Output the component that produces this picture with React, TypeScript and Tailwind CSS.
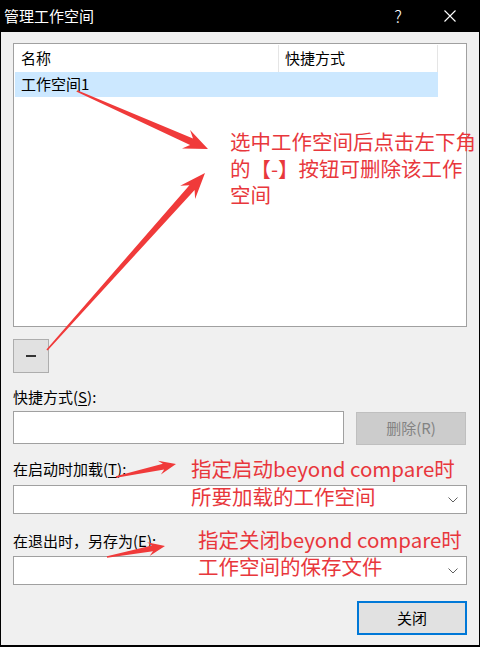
import React from "react";

type Pt = [number, number];

// tapered arrow with a filled head, like a screenshot-tool annotation
function arrowPoints(tail: Pt, tip: Pt, head: number, headHalf: number, shaft: number) {
	const dx = tip[0] - tail[0];
	const dy = tip[1] - tail[1];
	const len = Math.hypot(dx, dy);
	const ux = dx / len;
	const uy = dy / len;
	const nx = -uy;
	const ny = ux;
	const base: Pt = [tip[0] - ux * head, tip[1] - uy * head];
	const neck: Pt = [tip[0] - ux * head * 0.75, tip[1] - uy * head * 0.75];
	const pts: Pt[] = [
		[tail[0] + nx * 0.8, tail[1] + ny * 0.8],
		[neck[0] + nx * shaft, neck[1] + ny * shaft],
		[base[0] + nx * headHalf, base[1] + ny * headHalf],
		tip,
		[base[0] - nx * headHalf, base[1] - ny * headHalf],
		[neck[0] - nx * shaft, neck[1] - ny * shaft],
		[tail[0] - nx * 0.8, tail[1] - ny * 0.8],
	];
	return pts.map((p) => `${p[0].toFixed(1)},${p[1].toFixed(1)}`).join(" ");
}

const arrows = [
	{ tail: [77, 91] as Pt, tip: [208, 149] as Pt, head: 24, half: 10, shaft: 3.5 },
	{ tail: [47, 350] as Pt, tip: [205, 173] as Pt, head: 26, half: 10, shaft: 3.5 },
	{ tail: [116, 477] as Pt, tip: [176, 464] as Pt, head: 17, half: 7, shaft: 3 },
	{ tail: [107, 557] as Pt, tip: [165, 546] as Pt, head: 17, half: 7, shaft: 3 },
];

function Chevron() {
	return (
		<svg width="10" height="6" viewBox="0 0 10 6" className="mr-[8px]">
			<path d="M0.5 0.5 L5 5 L9.5 0.5" fill="none" stroke="#606060" strokeWidth="1" />
		</svg>
	);
}

function Label({ text, mn, tail }: { text: string; mn: string; tail: string }) {
	return (
		<div className="h-[20px] leading-[20px] text-[15px] text-black">
			{text}(<span className="underline underline-offset-2">{mn}</span>){tail}
		</div>
	);
}

export default function App() {
	return (
		<div
			className="relative w-[480px] h-[647px] bg-black flex flex-col px-px pb-[2px] overflow-hidden"
			style={{ fontFamily: '"Noto Sans CJK SC", "Noto Sans", sans-serif' }}
		>
			<div className="h-[32px] shrink-0 flex items-center text-white text-[15px] pl-[3px]">
				<span className="flex-1">管理工作空间</span>
				<span className="w-[20px] text-center text-[17px] font-light mr-[36px]">?</span>
				<svg width="12" height="12" viewBox="0 0 12 12" className="mr-[23px]">
					<path d="M0.5 0.5 L11.5 11.5 M11.5 0.5 L0.5 11.5" stroke="#fff" strokeWidth="1.1" />
				</svg>
			</div>

			<div className="flex-1 bg-[#f0f0f0] px-[12px] flex flex-col text-[15px] text-black">
				{/* workspace list */}
				<div className="mt-[11px] h-[284px] border border-[#a0a0a0] bg-white pl-px pt-px">
					<div className="flex h-[27px] w-[423px]">
						<div className="w-[264px] pl-[6px] flex items-center border-r border-[#e5e5e5]">名称</div>
						<div className="flex-1 pl-[6px] flex items-center border-r border-[#e5e5e5]">快捷方式</div>
					</div>
					<div className="h-[25px] w-[423px] bg-[#cce8ff] pl-[6px] flex items-center">工作空间1</div>
				</div>

				<button className="mt-[12px] w-[36px] h-[34px] bg-[#e1e1e1] border border-[#adadad] flex items-center justify-center">
					<span className="block w-[10px] h-[2px] bg-[#333]" />
				</button>

				<div className="mt-[14px]">
					<Label text="快捷方式" mn="S" tail=":" />
				</div>
				<div className="mt-[4px] flex items-start justify-between">
					<div className="w-[331px] h-[33px] bg-white border border-[#a0a0a0]" />
					<button className="mt-px mr-px w-[110px] h-[33px] bg-[#cccccc] border border-[#bfbfbf] text-[#838383] text-[15px]">
						删除(R)
					</button>
				</div>

				<div className="mt-[14px]">
					<Label text="在启动时加载" mn="T" tail=":" />
				</div>
				<div className="mt-[6px] h-[29px] bg-white border border-[#a0a0a0] flex items-center justify-end">
					<Chevron />
				</div>

				<div className="mt-[17px]">
					<Label text="在退出时，另存为" mn="E" tail=":" />
				</div>
				<div className="mt-[5px] h-[29px] bg-white border border-[#a0a0a0] flex items-center justify-end">
					<Chevron />
				</div>

				<div className="mt-[16px] flex justify-end">
					<button className="w-[110px] h-[34px] bg-[#e1e1e1] border-2 border-[#0078d7] text-[15px]">关闭</button>
				</div>
			</div>

			{/* red annotations */}
			<svg className="absolute inset-0 pointer-events-none" width="480" height="647">
				{arrows.map((a, i) => (
					<polygon key={i} points={arrowPoints(a.tail, a.tip, a.head, a.half, a.shaft)} fill="#f03a3a" />
				))}
			</svg>
			<div className="absolute left-[230px] top-[128px] text-[20.5px] leading-[26.5px] text-[#e8373c] whitespace-nowrap">
				<div>选中工作空间后点击左下角</div>
				<div>的【-】按钮可删除该工作</div>
				<div>空间</div>
			</div>
			<div className="absolute left-[191px] top-[454px] text-[20.5px] leading-[28px] text-[#e8373c] whitespace-nowrap">
				<div>指定启动beyond compare时</div>
				<div>所要加载的工作空间</div>
			</div>
			<div className="absolute left-[198px] top-[526px] text-[20.5px] leading-[27px] text-[#e8373c] whitespace-nowrap">
				<div>指定关闭beyond compare时</div>
				<div>工作空间的保存文件</div>
			</div>
		</div>
	);
}
